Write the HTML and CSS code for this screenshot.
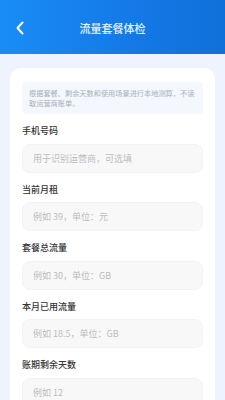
FILE: index.html
```html
<!DOCTYPE html>
<html lang="zh-CN">
<head>
    <meta charset="UTF-8">
    <meta name="viewport" content="width=device-width, initial-scale=1.0">
    <title>流量套餐体检</title>
    <link rel="stylesheet" href="styles.css">
</head>
<body>
    <div class="page">
        <header class="topbar">
            <button class="back" aria-label="返回">
                <svg width="10" height="14" viewBox="0 0 10 14">
                    <path d="M7.5 1.5 L2.5 7 L7.5 12.5" fill="none" stroke="#fff" stroke-width="2" stroke-linecap="round" stroke-linejoin="round"/>
                </svg>
            </button>
            <h1>流量套餐体检</h1>
        </header>
        <section class="card">
            <p class="tip">根据套餐、剩余天数和使用场景进行本地测算，不读取运营商账单。</p>
            <div class="field">
                <label for="phone">手机号码</label>
                <input id="phone" type="text" placeholder="用于识别运营商，可选填">
            </div>
            <div class="field">
                <label for="rent">当前月租</label>
                <input id="rent" type="text" placeholder="例如 39，单位：元">
            </div>
            <div class="field">
                <label for="total">套餐总流量</label>
                <input id="total" type="text" placeholder="例如 30，单位：GB">
            </div>
            <div class="field">
                <label for="used">本月已用流量</label>
                <input id="used" type="text" placeholder="例如 18.5，单位：GB">
            </div>
            <div class="field">
                <label for="days">账期剩余天数</label>
                <input id="days" type="text" placeholder="例如 12">
            </div>
        </section>
    </div>
</body>
</html>
```

FILE: styles.css
```css
*{
    padding: 0;
    margin: 0;
    box-sizing: border-box;
}
body
{
    overflow: hidden;
    background: #eef3fd;
    font-family: "Noto Sans CJK SC", "Noto Sans", sans-serif;
}
.page
{
    width: 100%;
    min-height: 100vh;
}
.topbar
{
    height: 54px;
    background: linear-gradient(90deg, #1a8cf6 0%, #1379e6 60%, #1070da 100%);
    display: flex;
    align-items: center;
    justify-content: center;
    position: relative;
}
.back
{
    position: absolute;
    left: 14px;
    top: 20px;
    width: 12px;
    height: 16px;
    border: none;
    background: none;
    display: flex;
    align-items: center;
    justify-content: center;
}
.topbar h1
{
    color: #eaf3ff;
    font-size: 11px;
    font-weight: 500;
    line-height: 14px;
    margin-top: 1px;
}

.card
{
    margin: 14px 10px 0 10px;
    background: #fff;
    border-radius: 10px;
    padding: 14px 12px 0 12px;
}
.tip
{
    background: #f4f7fd;
    border-radius: 4px;
    padding: 6px 7px 6px 7px;
    font-size: 7.2px;
    line-height: 10px;
    color: #a8afbc;
    margin-bottom: 11px;
}
.field
{
    display: flex;
    flex-direction: column;
}
.field label
{
    font-size: 9px;
    line-height: 12px;
    color: #333;
    font-weight: 500;
    margin-bottom: 6.5px;
}
.field input
{
    height: 29px;
    border: 1px solid #f2f3f5;
    background: #f8f8f9;
    border-radius: 8px;
    padding: 0 10px;
    font-family: inherit;
    font-size: 9px;
    color: #333;
    margin-bottom: 11px;
    outline: none;
}
.field input::placeholder
{
    color: #bcbcc0;
}
```
